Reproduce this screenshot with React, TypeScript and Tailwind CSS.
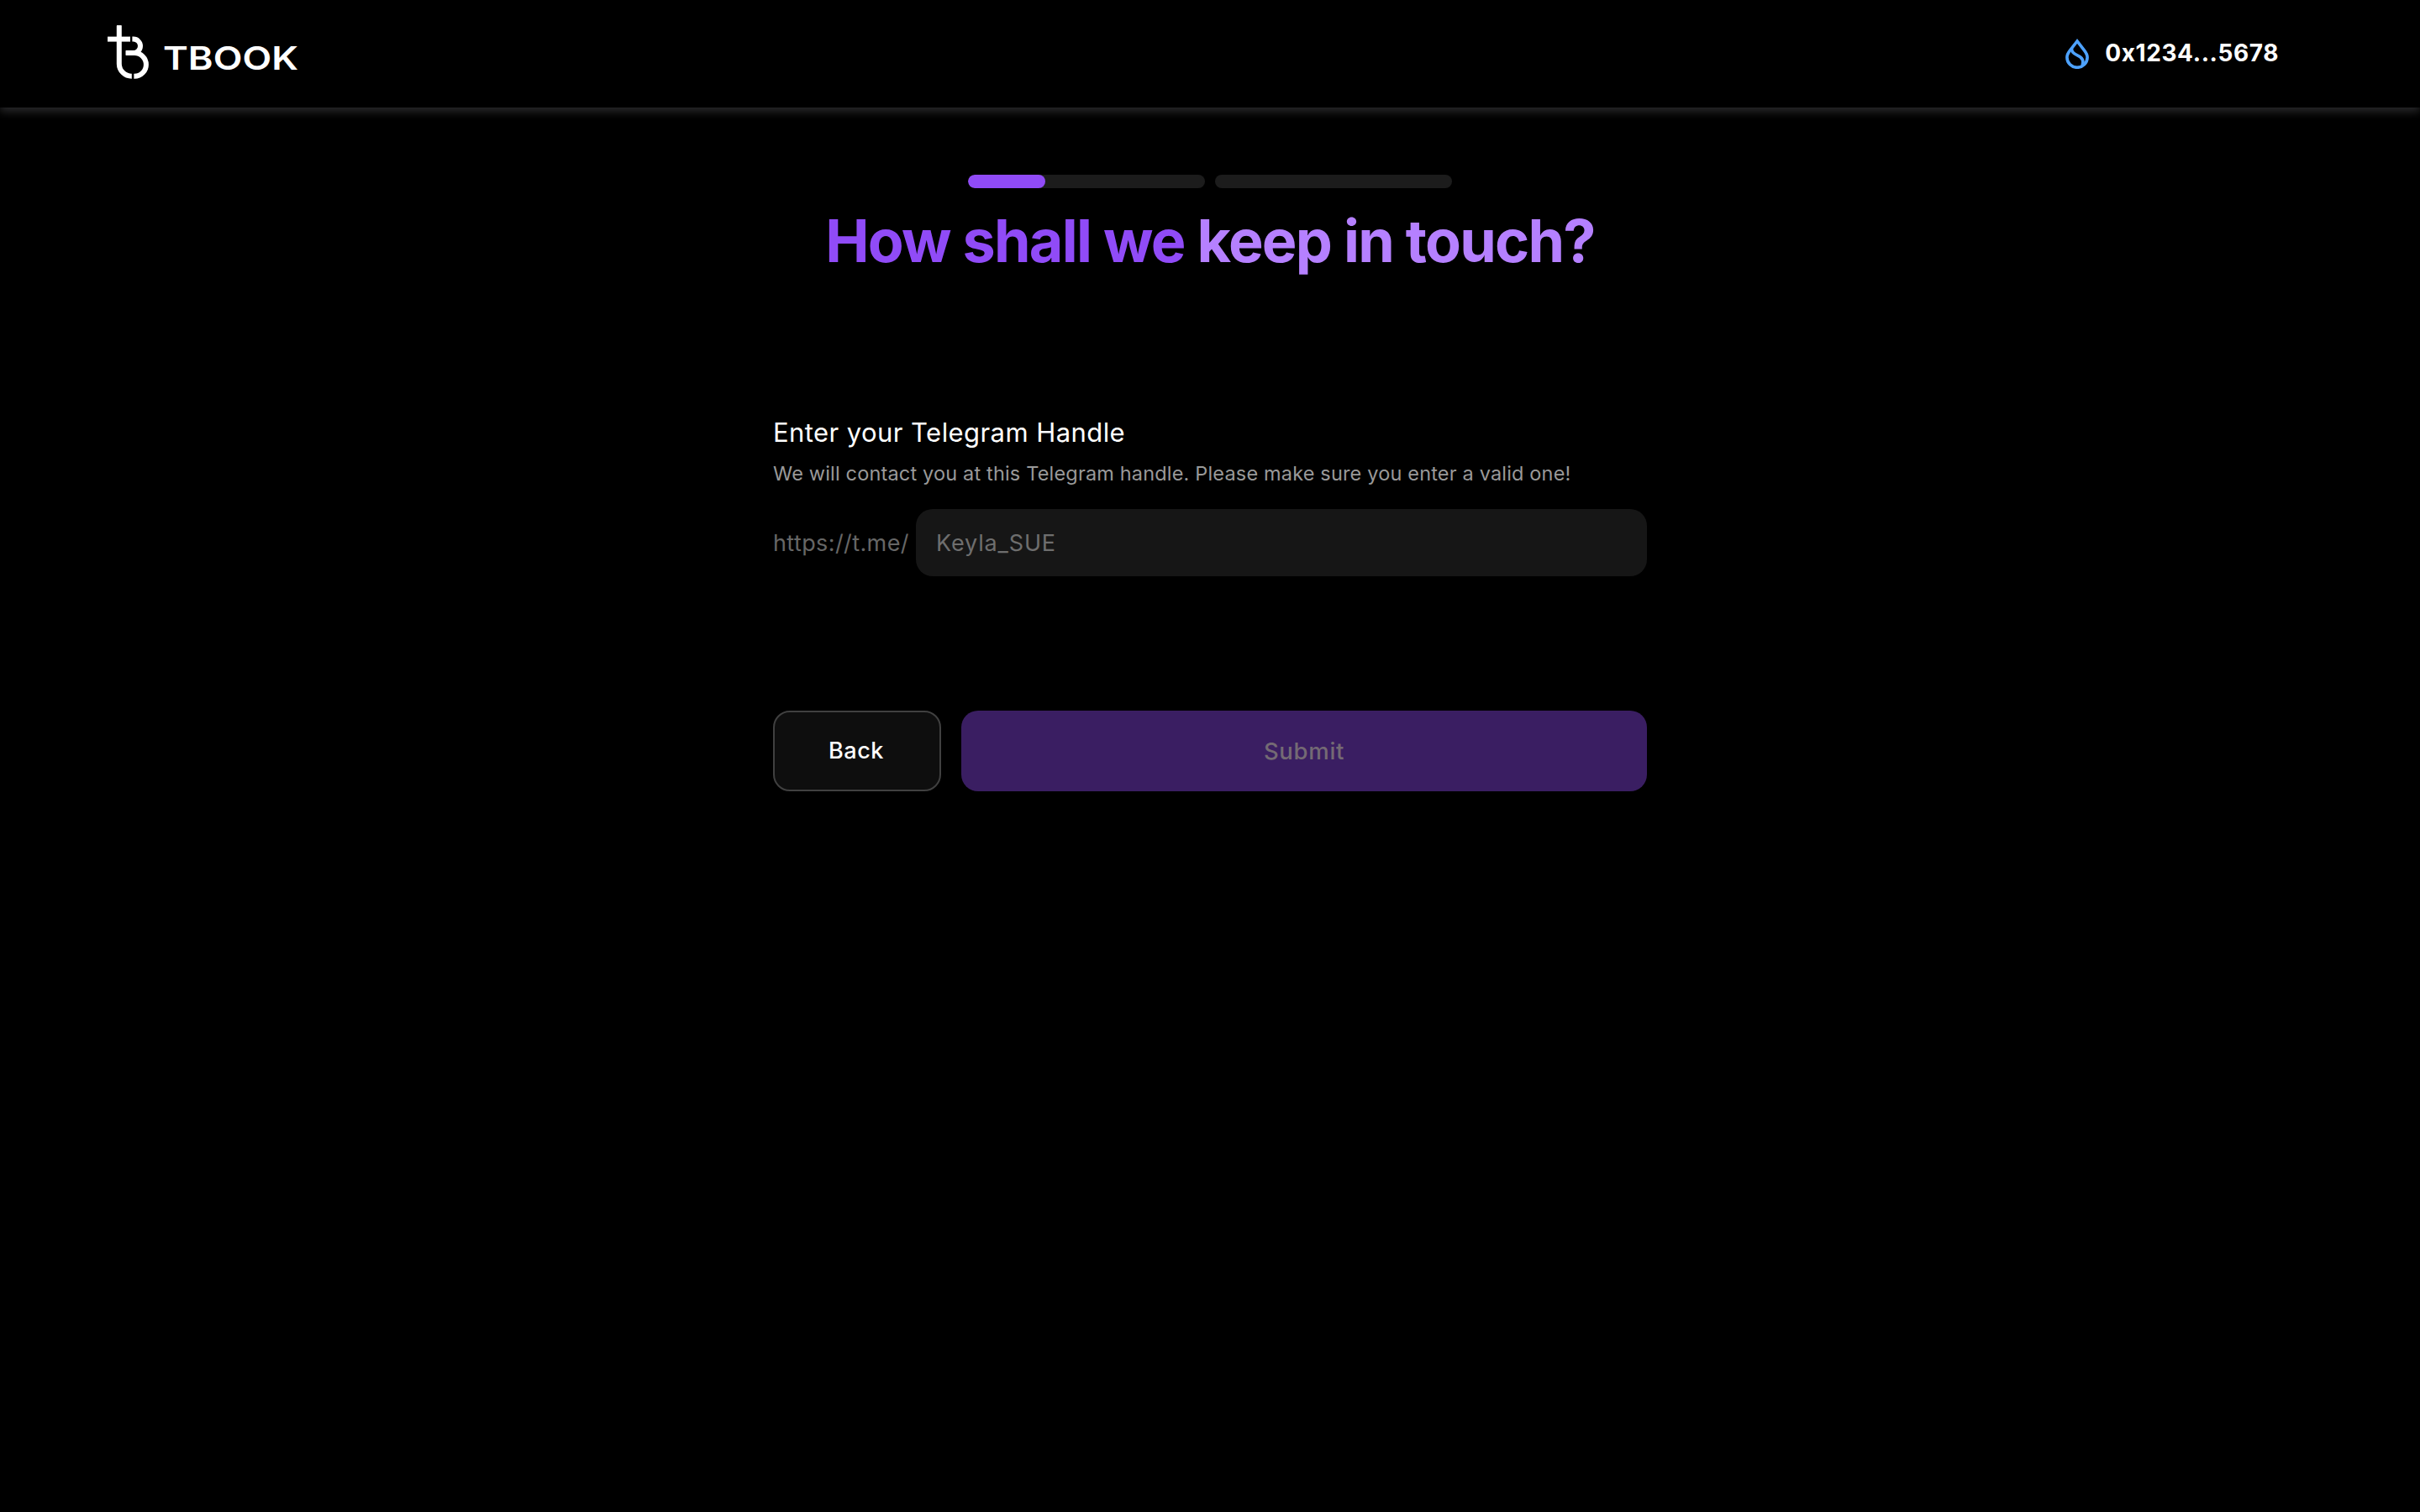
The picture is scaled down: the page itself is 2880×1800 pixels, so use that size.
import React, { useState } from "react";

const LogoMark = () => (
  <svg className="h-16 w-[49px]" viewBox="0 0 49 64" fill="none" stroke="#fff" strokeWidth="6">
    <path d="M13.8 0.8V46a15 15 0 0 0 15 14.8" />
    <path d="M0.4 16.6H27" />
    <path d="M29.4 16.6h1.4a8.2 8.2 0 0 1 0 16.4" />
    <path d="M22 33h10a13.9 13.9 0 0 1 0 27.8h-0.6" />
    <path d="M11.4 0.6h4.8M0.6 14.2v4.8M22 30.6v4.8" strokeWidth="1" strokeLinecap="round" />
  </svg>
);

const Wordmark = () => (
  <svg className="mt-3 h-11 w-[168px] overflow-visible" viewBox="0 0 168 44" fill="#fff">
    <text
      x="0"
      y="37"
      textLength="161"
      lengthAdjust="spacingAndGlyphs"
      fontFamily="Inter, sans-serif"
      fontSize="38.5"
      fontWeight="600"
    >
      TBOOK
    </text>
  </svg>
);

const SuiIcon = () => (
  <svg className="h-9 w-7" viewBox="0 0 28 36" fill="none" stroke="#4da2ff" strokeWidth="3.6">
    <path d="M14 3L5.6 13.8C3.4 16.6 1.9 19 1.9 22.2a12.1 12.1 0 0 0 24.2 0C26.1 19 24.6 16.6 22.4 13.8Z" />
    <path d="M7.6 11.4C6.8 15.4 9.6 17.8 14.2 19.8C19.8 22.2 22.2 26.2 20.2 32" />
  </svg>
);

interface ProgressProps {
  steps: number[];
}

const Progress: React.FC<ProgressProps> = ({ steps }) => (
  <div className="flex w-[576px] gap-3">
    {steps.map((value, i) => (
      <div key={i} className="h-4 flex-1 overflow-hidden rounded-full bg-[#1c1c1c]">
        <div className="h-full rounded-full bg-[#904bf7]" style={{ width: `${value}%` }} />
      </div>
    ))}
  </div>
);

const App: React.FC = () => {
  const [handle, setHandle] = useState("");

  return (
    <div className="min-h-screen bg-black font-['Inter',sans-serif] text-white">
      <header className="flex h-32 items-center justify-between bg-black pr-[168px] pl-32 shadow-[0_5px_10px_#29292b]">
        <div className="flex items-center gap-[17px] pb-1">
          <LogoMark />
          <Wordmark />
        </div>
        <div className="flex items-center gap-[19px]">
          <SuiIcon />
          <span className="pb-0.5 text-[28px] leading-10 font-bold tracking-[0.6px]">0x1234...5678</span>
        </div>
      </header>

      <main className="flex flex-col items-center pt-20">
        <Progress steps={[32.6, 0]} />
        <h1 className="mt-[21px] text-[70px] leading-[84px] font-bold tracking-[-1.75px] text-[#904bf7]">
          How shall we <span className="text-[#b580ff]">keep in touch?</span>
        </h1>

        <form className="mt-[166px] w-[1040px]" onSubmit={(e) => e.preventDefault()}>
          <label htmlFor="handle" className="block text-[31px] leading-10 tracking-[0.43px]">
            Enter your Telegram Handle
          </label>
          <p className="mt-[13px] text-[23.5px] leading-8 tracking-[0.17px] text-[#999999]">
            We will contact you at this Telegram handle. Please make sure you enter a valid one!
          </p>
          <div className="mt-[26px] flex items-center">
            <span className="w-[170px] pt-0.5 text-[27px] tracking-[0.4px] text-[#666666]">https://t.me/</span>
            <input
              id="handle"
              value={handle}
              onChange={(e) => setHandle(e.target.value)}
              placeholder="Keyla_SUE"
              className="h-20 flex-1 rounded-[20px] bg-[#161616] px-6 text-[27px] tracking-[0.85px] outline-none placeholder:text-[#6e6e6e]"
            />
          </div>

          {/* Actions */}
          <div className="mt-40 flex gap-6">
            <button
              type="button"
              className="h-24 w-[200px] rounded-[20px] border-2 border-[#404040] bg-[#0e0e0e] pr-0.5 text-[27px] font-medium tracking-[0.6px]"
            >
              Back
            </button>
            <button
              type="submit"
              disabled={!handle}
              className="h-24 flex-1 rounded-[20px] bg-[#904bf7] pt-0.5 text-[27.5px] font-medium tracking-[0.7px] disabled:bg-[#3a1e62] disabled:text-[#746a74]"
            >
              Submit
            </button>
          </div>
        </form>
      </main>
    </div>
  );
};

export default App;
